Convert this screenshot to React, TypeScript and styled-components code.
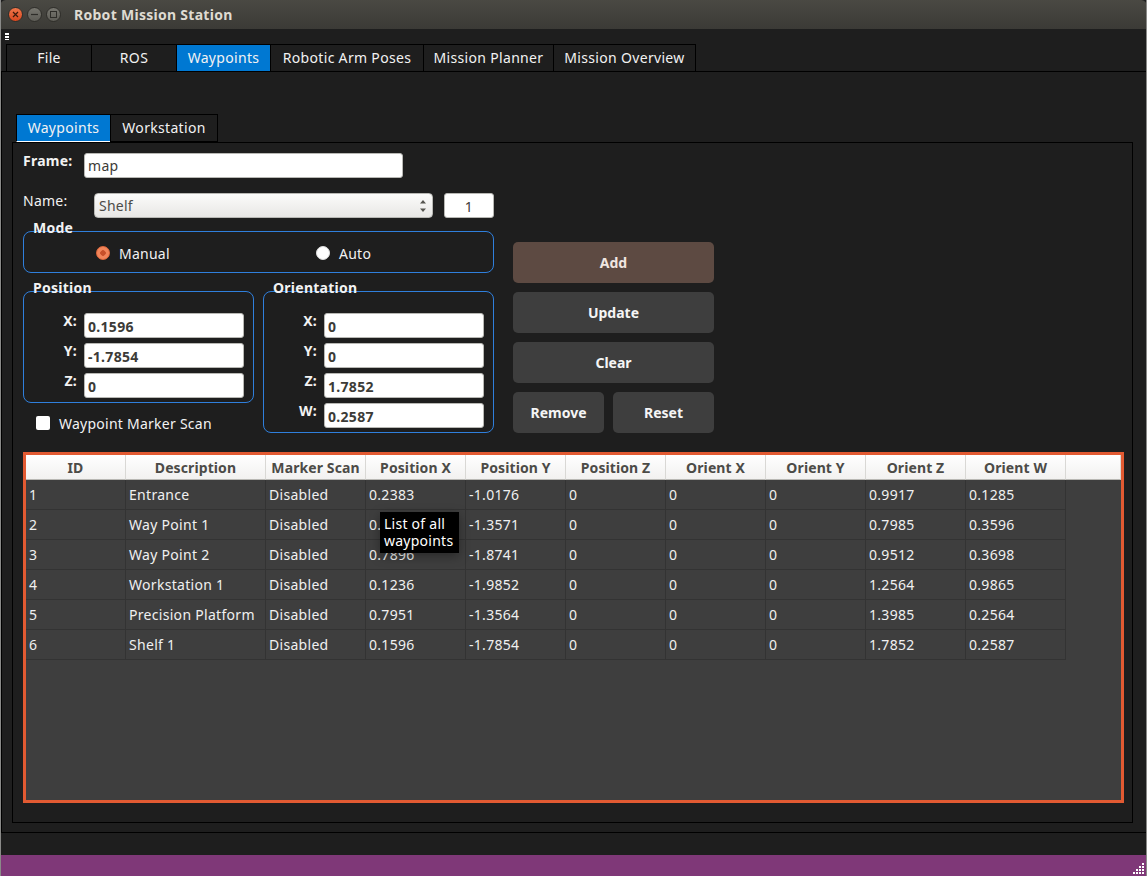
import styled, { createGlobalStyle } from "styled-components";

const GlobalStyle = createGlobalStyle`
  html, body {
    margin: 0;
    padding: 0;
    background: #1e1e1e;
  }
  * {
    box-sizing: border-box;
  }
`;

const FONT = `"Noto Sans", "Open Sans", sans-serif`;

const Window = styled.div`
  width: 1147px;
  height: 876px;
  display: flex;
  flex-direction: column;
  overflow: hidden;
  background: #1e1e1e;
  border-left: 1px solid #8a8a88;
  border-right: 1px solid #8a8a88;
  font-family: ${FONT};
  font-size: 14px;
  letter-spacing: 0.25px;
  color: #f2f2f2;
`;

const TitleBar = styled.div`
  height: 29px;
  flex: none;
  display: flex;
  align-items: center;
  padding-left: 8px;
  gap: 4px;
  margin: 0 -1px;
  border-radius: 6px 6px 0 0;
  background: linear-gradient(#4a4943, #3b3a36);
`;

const WinButton = styled.div<{ $close?: boolean }>`
  width: 15px;
  height: 15px;
  border-radius: 50%;
  display: flex;
  align-items: center;
  justify-content: center;
  background: ${(p) => (p.$close ? "linear-gradient(#f0764a, #d9481f)" : "linear-gradient(#77766f, #5d5c56)")};
  border: 1px solid #2f2e2a;
`;

const WinTitle = styled.div`
  margin-left: 9px;
  font-family: ${FONT};
  font-size: 14px;
  font-weight: 700;
  letter-spacing: 0.28px;
  color: #dfdbd2;
`;

const ToolbarStrip = styled.div`
  height: 15px;
  flex: none;
  padding: 4px 0 0 4px;
`;

const Handle = styled.div`
  width: 4px;
  height: 7px;
  background: repeating-linear-gradient(#fff 0 2px, #1e1e1e 2px 3px);
`;

const TabRow = styled.div<{ $inner?: boolean }>`
  display: flex;
  flex: none;
  height: 28px;
  padding-left: ${(p) => (p.$inner ? "15px" : "6px")};
`;

const Tab = styled.div<{ $active?: boolean; $w: number }>`
  width: ${(p) => p.$w}px;
  flex: none;
  display: flex;
  align-items: center;
  justify-content: center;
  white-space: nowrap;
  border: 1px solid #000;
  margin-left: -1px;
  background: ${(p) => (p.$active ? "#0078d2" : "#1e1e1e")};
  border-bottom: ${(p) => (p.$active ? "1px solid #fff" : "1px solid #000")};
  font-size: 14px;
  letter-spacing: 0.32px;
  padding-bottom: 1px;
`;

const MainPane = styled.div`
  height: 762px;
  flex: none;
  border: 1px solid #000;
  border-right: none;
  margin-top: -1px;
  padding-top: 42px;
  display: flex;
  flex-direction: column;
`;

const InnerPane = styled.div`
  width: 1121px;
  height: 681px;
  flex: none;
  margin-left: 10px;
  border: 1px solid #000;
  padding: 10px 0 0 10px;
  display: flex;
  flex-direction: column;
`;

const Footer = styled.div`
  height: 22px;
  flex: none;
`;

const StatusBar = styled.div`
  height: 21px;
  flex: none;
  display: flex;
  justify-content: flex-end;
  align-items: flex-end;
  background: #7f3878;
  padding: 0 2px 2px 0;
`;

const FormArea = styled.div`
  display: flex;
  gap: 19px;
  height: 299px;
  flex: none;
`;

const FormColumn = styled.div`
  width: 471px;
  display: flex;
  flex-direction: column;
`;

const FrameRow = styled.div`
  display: flex;
  align-items: flex-start;
  height: 40px;
`;

const NameRow = styled.div`
  display: flex;
  align-items: flex-start;
  height: 38px;
`;

const FieldLabel = styled.div<{ $bold?: boolean; $w: number }>`
  width: ${(p) => p.$w}px;
  flex: none;
  font-weight: ${(p) => (p.$bold ? 700 : 400)};
  line-height: 16px;
`;

const TextField = styled.input<{ $bold?: boolean; $w: number }>`
  width: ${(p) => p.$w}px;
  height: 25px;
  flex: none;
  border: 1px solid #b8b8b4;
  border-radius: 3px;
  background: #fff;
  padding: 2px 3px 0;
  font-family: ${FONT};
  font-size: 14px;
  letter-spacing: 0.3px;
  font-weight: ${(p) => (p.$bold ? 700 : 400)};
  color: #3c3b37;
  outline: none;
`;

const FrameField = styled(TextField)`
  padding-top: 0;
`;

const SpinField = styled(TextField)`
  margin-left: 11px;
  text-align: center;
  padding: 2px 0 0;
`;

const Combo = styled.div`
  width: 339px;
  height: 25px;
  flex: none;
  display: flex;
  align-items: center;
  justify-content: space-between;
  padding: 0 5px 0 4px;
  border: 1px solid #b8b8b4;
  border-radius: 4px;
  background: linear-gradient(#fbfbfa, #e8e7e5);
  color: #4c4b47;
`;

const Group = styled.div<{ $w: number; $h: number }>`
  width: ${(p) => p.$w}px;
  height: ${(p) => p.$h}px;
  flex: none;
  border: 1px solid #2f7fdc;
  border-radius: 8px;
`;

const GroupTitle = styled.div`
  margin: -12px 0 0 9px;
  height: 16px;
  line-height: 16px;
  font-weight: 700;
  font-size: 14px;
`;

const ModeRow = styled.div`
  display: grid;
  grid-template-columns: 220px 1fr;
  padding: 7px 0 0 72px;
`;

const Choice = styled.div`
  display: flex;
  align-items: center;
  gap: 9px;
  height: 20px;
`;

const RadioDot = styled.span<{ $on?: boolean }>`
  width: 14px;
  height: 14px;
  border-radius: 50%;
  background: ${(p) => (p.$on ? "radial-gradient(circle, #c8502a 0 2.5px, #f2855a 3px)" : "#fff")};
  border: 1px solid ${(p) => (p.$on ? "#e0683c" : "#ddd")};
`;

const CheckBox = styled.span`
  width: 14px;
  height: 14px;
  border-radius: 2px;
  background: #fff;
`;

const Columns = styled.div`
  display: flex;
  gap: 9px;
  margin-top: 18px;
`;

const LeftStack = styled.div`
  display: flex;
  flex-direction: column;
`;

const CoordRows = styled.div`
  display: flex;
  flex-direction: column;
  gap: 5px;
  padding-top: 17px;
`;

const CoordRow = styled.div`
  display: flex;
  align-items: flex-start;
`;

const CoordLabel = styled.div`
  width: 60px;
  flex: none;
  padding-right: 7px;
  text-align: right;
  font-weight: 700;
  line-height: 16px;
`;

const ScanRow = styled(Choice)`
  margin: 10px 0 0 13px;
`;

const ButtonColumn = styled.div`
  width: 201px;
  display: flex;
  flex-direction: column;
  gap: 9px;
  padding-top: 89px;
`;

const ActionRow = styled.div`
  display: flex;
  gap: 9px;
`;

const ActionButton = styled.div<{ $tint?: boolean; $w?: number }>`
  height: 41px;
  width: ${(p) => (p.$w ? `${p.$w}px` : "100%")};
  display: flex;
  align-items: center;
  justify-content: center;
  border-radius: 5px;
  font-weight: 700;
  font-size: 14px;
  letter-spacing: 0;
  background: ${(p) => (p.$tint ? "#5d4a42" : "#3e3e3e")};
  color: ${(p) => (p.$tint ? "#f0e6e0" : "#f5f5f5")};
`;

const TableFrame = styled.div`
  position: relative;
  width: 1101px;
  height: 351px;
  flex: none;
  border: 3px solid #e25a32;
  background: #3e3e3e;
`;

const Grid = styled.table`
  width: 1095px;
  table-layout: fixed;
  border-collapse: separate;
  border-spacing: 0;
  font-size: 14px;
`;

const HeadCell = styled.th`
  height: 25px;
  padding: 0;
  background: linear-gradient(#ffffff, #f2f1f0);
  border-right: 1px solid #d9d8d5;
  border-bottom: 1px solid #b9b8b4;
  color: #4c4b47;
  font-weight: 700;
  letter-spacing: 0.1px;
  white-space: nowrap;
`;

const BodyRow = styled.tr`
  height: 30px;
`;

const BodyCell = styled.td`
  padding: 0 3px;
  border-right: 1px solid #333;
  border-bottom: 1px solid #333;
  white-space: nowrap;
  letter-spacing: 0.3px;
  color: #f0f0f0;
`;

const FillCell = styled.td``;

const Tip = styled.div`
  position: absolute;
  left: 354px;
  top: 57px;
  width: 79px;
  height: 41px;
  padding: 3px 4px;
  background: #000;
  color: #fff;
  line-height: 17px;
  box-shadow: 0 3px 10px rgba(0, 0, 0, 0.35);
`;

const COLUMNS: [string, number][] = [
  ["ID", 100],
  ["Description", 140],
  ["Marker Scan", 100],
  ["Position X", 100],
  ["Position Y", 100],
  ["Position Z", 100],
  ["Orient X", 100],
  ["Orient Y", 100],
  ["Orient Z", 100],
  ["Orient W", 100],
];

const ROWS = [
  ["1", "Entrance", "Disabled", "0.2383", "-1.0176", "0", "0", "0", "0.9917", "0.1285"],
  ["2", "Way Point 1", "Disabled", "0.1253", "-1.3571", "0", "0", "0", "0.7985", "0.3596"],
  ["3", "Way Point 2", "Disabled", "0.7896", "-1.8741", "0", "0", "0", "0.9512", "0.3698"],
  ["4", "Workstation 1", "Disabled", "0.1236", "-1.9852", "0", "0", "0", "1.2564", "0.9865"],
  ["5", "Precision Platform", "Disabled", "0.7951", "-1.3564", "0", "0", "0", "1.3985", "0.2564"],
  ["6", "Shelf 1", "Disabled", "0.1596", "-1.7854", "0", "0", "0", "1.7852", "0.2587"],
];

const POSITION = [
  ["X:", "0.1596"],
  ["Y:", "-1.7854"],
  ["Z:", "0"],
];

const ORIENTATION = [
  ["X:", "0"],
  ["Y:", "0"],
  ["Z:", "1.7852"],
  ["W:", "0.2587"],
];

function Coords({ items }: { items: string[][] }) {
  return (
    <CoordRows>
      {items.map(([label, value]) => (
        <CoordRow key={label}>
          <CoordLabel>{label}</CoordLabel>
          <TextField $bold $w={160} defaultValue={value} readOnly />
        </CoordRow>
      ))}
    </CoordRows>
  );
}

export default function App() {
  return (
    <Window>
      <GlobalStyle />
      <TitleBar>
        <WinButton $close>
          <svg width="7" height="7" viewBox="0 0 7 7">
            <path d="M1 1l5 5M6 1l-5 5" stroke="#3b1a0c" strokeWidth="1.2" />
          </svg>
        </WinButton>
        <WinButton>
          <svg width="7" height="7" viewBox="0 0 7 7">
            <path d="M0 3.5h7" stroke="#2e2d29" strokeWidth="1.2" />
          </svg>
        </WinButton>
        <WinButton>
          <svg width="7" height="7" viewBox="0 0 7 7">
            <rect x="0.5" y="0.5" width="6" height="6" fill="none" stroke="#2e2d29" />
          </svg>
        </WinButton>
        <WinTitle>Robot Mission Station</WinTitle>
      </TitleBar>
      <ToolbarStrip>
        <Handle />
      </ToolbarStrip>
      <TabRow>
        <Tab $w={86}>File</Tab>
        <Tab $w={86}>ROS</Tab>
        <Tab $w={95} $active>
          Waypoints
        </Tab>
        <Tab $w={154}>Robotic Arm Poses</Tab>
        <Tab $w={131}>Mission Planner</Tab>
        <Tab $w={143}>Mission Overview</Tab>
      </TabRow>
      <MainPane>
        <TabRow $inner>
          <Tab $w={95} $active>
            Waypoints
          </Tab>
          <Tab $w={108}>Workstation</Tab>
        </TabRow>
        <InnerPane>
          <FormArea>
            <FormColumn>
              <FrameRow>
                <FieldLabel $bold $w={61}>
                  Frame:
                </FieldLabel>
                <FrameField $w={319} defaultValue="map" readOnly />
              </FrameRow>
              <NameRow>
                <FieldLabel $w={71}>Name:</FieldLabel>
                <Combo>
                  Shelf
                  <svg width="8" height="14" viewBox="0 0 8 14">
                    <path d="M4 1l3 3.5H1zM4 13l3-3.5H1z" fill="#55544f" />
                  </svg>
                </Combo>
                <SpinField $w={50} defaultValue="1" readOnly />
              </NameRow>
              <Group $w={471} $h={42}>
                <GroupTitle>Mode</GroupTitle>
                <ModeRow>
                  <Choice>
                    <RadioDot $on />
                    Manual
                  </Choice>
                  <Choice>
                    <RadioDot />
                    Auto
                  </Choice>
                </ModeRow>
              </Group>
              <Columns>
                <LeftStack>
                  <Group $w={231} $h={112}>
                    <GroupTitle>Position</GroupTitle>
                    <Coords items={POSITION} />
                  </Group>
                  <ScanRow>
                    <CheckBox />
                    Waypoint Marker Scan
                  </ScanRow>
                </LeftStack>
                <Group $w={231} $h={142}>
                  <GroupTitle>Orientation</GroupTitle>
                  <Coords items={ORIENTATION} />
                </Group>
              </Columns>
            </FormColumn>
            <ButtonColumn>
              <ActionButton $tint>Add</ActionButton>
              <ActionButton>Update</ActionButton>
              <ActionButton>Clear</ActionButton>
              <ActionRow>
                <ActionButton $w={91}>Remove</ActionButton>
                <ActionButton $w={101}>Reset</ActionButton>
              </ActionRow>
            </ButtonColumn>
          </FormArea>
          <TableFrame>
            <Grid>
              <colgroup>
                {COLUMNS.map(([name, width]) => (
                  <col key={name} style={{ width }} />
                ))}
                <col />
              </colgroup>
              <thead>
                <tr>
                  {COLUMNS.map(([name]) => (
                    <HeadCell key={name}>{name}</HeadCell>
                  ))}
                  <HeadCell />
                </tr>
              </thead>
              <tbody>
                {ROWS.map((row) => (
                  <BodyRow key={row[0]}>
                    {row.map((cell, i) => (
                      <BodyCell key={i}>{cell}</BodyCell>
                    ))}
                    <FillCell />
                  </BodyRow>
                ))}
              </tbody>
            </Grid>
            <Tip>
              List of all
              <br />
              waypoints
            </Tip>
          </TableFrame>
        </InnerPane>
      </MainPane>
      <Footer />
      <StatusBar>
        <svg width="11" height="11" viewBox="0 0 11 11" fill="#fff">
          <path d="M9 0h2v2H9zM9 3h2v2H9zM6 3h2v2H6zM9 6h2v2H9zM6 6h2v2H6zM3 6h2v2H3zM9 9h2v2H9zM6 9h2v2H6zM3 9h2v2H3zM0 9h2v2H0z" />
        </svg>
      </StatusBar>
    </Window>
  );
}
